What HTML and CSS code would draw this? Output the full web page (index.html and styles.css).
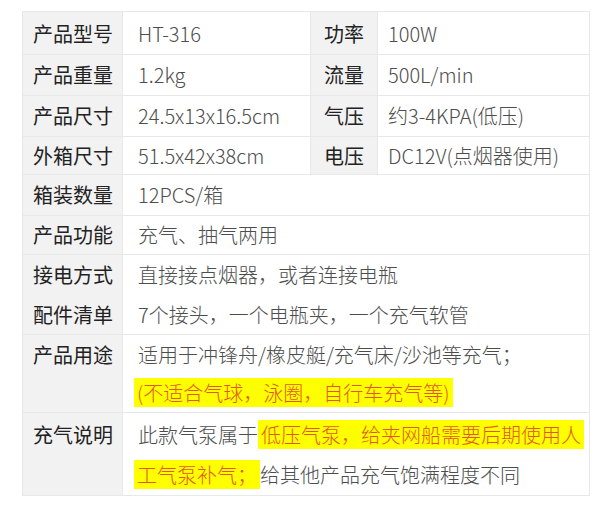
FILE: index.html
```html
<!DOCTYPE html>
<html lang="zh-CN">
<head>
<meta charset="utf-8">
<title>产品参数</title>
<link rel="stylesheet" href="styles.css">
</head>
<body>
<div class="page">
  <table class="spec">
    <colgroup>
      <col class="c-label1">
      <col class="c-value1">
      <col class="c-label2">
      <col class="c-value2">
    </colgroup>
    <tbody>
      <tr class="r1">
        <th class="lbl">产品型号</th><td class="val">HT-316</td>
        <th class="lbl lbl2">功率</th><td class="val val2">100W</td>
      </tr>
      <tr>
        <th class="lbl">产品重量</th><td class="val">1.2kg</td>
        <th class="lbl lbl2">流量</th><td class="val val2">500L/min</td>
      </tr>
      <tr>
        <th class="lbl">产品尺寸</th><td class="val">24.5x13x16.5cm</td>
        <th class="lbl lbl2">气压</th><td class="val val2">约3-4KPA(低压)</td>
      </tr>
      <tr class="r4">
        <th class="lbl">外箱尺寸</th><td class="val">51.5x42x38cm</td>
        <th class="lbl lbl2">电压</th><td class="val val2">DC12V(点烟器使用)</td>
      </tr>
      <tr>
        <th class="lbl">箱装数量</th><td class="val" colspan="3">12PCS/箱</td>
      </tr>
      <tr class="r6">
        <th class="lbl">产品功能</th><td class="val" colspan="3">充气、抽气两用</td>
      </tr>
      <tr class="r7">
        <th class="lbl">接电方式<br>配件清单</th>
        <td class="val" colspan="3">直接接点烟器，或者连接电瓶<br>7个接头，一个电瓶夹，一个充气软管</td>
      </tr>
      <tr class="r8">
        <th class="lbl top">产品用途</th>
        <td class="val" colspan="3"><span class="line">适用于冲锋舟/橡皮艇/充气床/沙池等充气；</span><br><span class="line"><span class="hl hl-start">(不适合气球，泳圈，自行车充气等)</span></span></td>
      </tr>
      <tr class="r9">
        <th class="lbl top">充气说明</th>
        <td class="val" colspan="3"><span class="line">此款气泵属于<span class="hl">低压气泵，给夹网船需要后期使用人</span></span><br><span class="line"><span class="hl hl-start">工气泵补气；</span>给其他产品充气饱满程度不同</span></td>
      </tr>
    </tbody>
  </table>
</div>
</body>
</html>
```

FILE: styles.css
```css
html, body {
  margin: 0;
  padding: 0;
  background: #ffffff;
}

.page {
  padding: 11px 0 0 22px;
}

.spec {
  width: 567px;
  border-collapse: collapse;
  table-layout: fixed;
  font-family: "Noto Sans CJK SC", "Noto Sans", sans-serif;
  font-size: 20px;
  line-height: 40px;
}

.c-label1 { width: 100px; }
.c-value1 { width: 188px; }
.c-label2 { width: 67px; }
.c-value2 { width: 212px; }

.spec th,
.spec td {
  border: 1px solid #e8e8e8;
  padding: 0;
  vertical-align: middle;
  white-space: nowrap;
}

.lbl {
  background: #f2f2f2;
  color: #222222;
  font-weight: 400;
  text-align: left;
  padding-left: 10px !important;
}

.lbl2 {
  padding-left: 13px !important;
}

.lbl.top {
  vertical-align: top;
}

.val {
  background: #ffffff;
  color: #4d4d4d;
  font-weight: 300;
  padding-left: 15px !important;
}

.val2 {
  padding-left: 10px !important;
}

.r1 th, .r1 td { padding-top: 2px; }
.r4 th, .r4 td { line-height: 37px; }
.r6 th, .r6 td { line-height: 38px; }
.r7 th, .r7 td { line-height: 39.5px; }

.r8 th, .r8 td {
  padding-top: 1px;
  line-height: 38px;
}

.r9 th, .r9 td {
  padding-top: 2px;
}

.hl {
  background: #ffff00;
  color: #e4571c;
  padding: 0 3px;
}

.hl-start {
  margin-left: -4px;
}
```
